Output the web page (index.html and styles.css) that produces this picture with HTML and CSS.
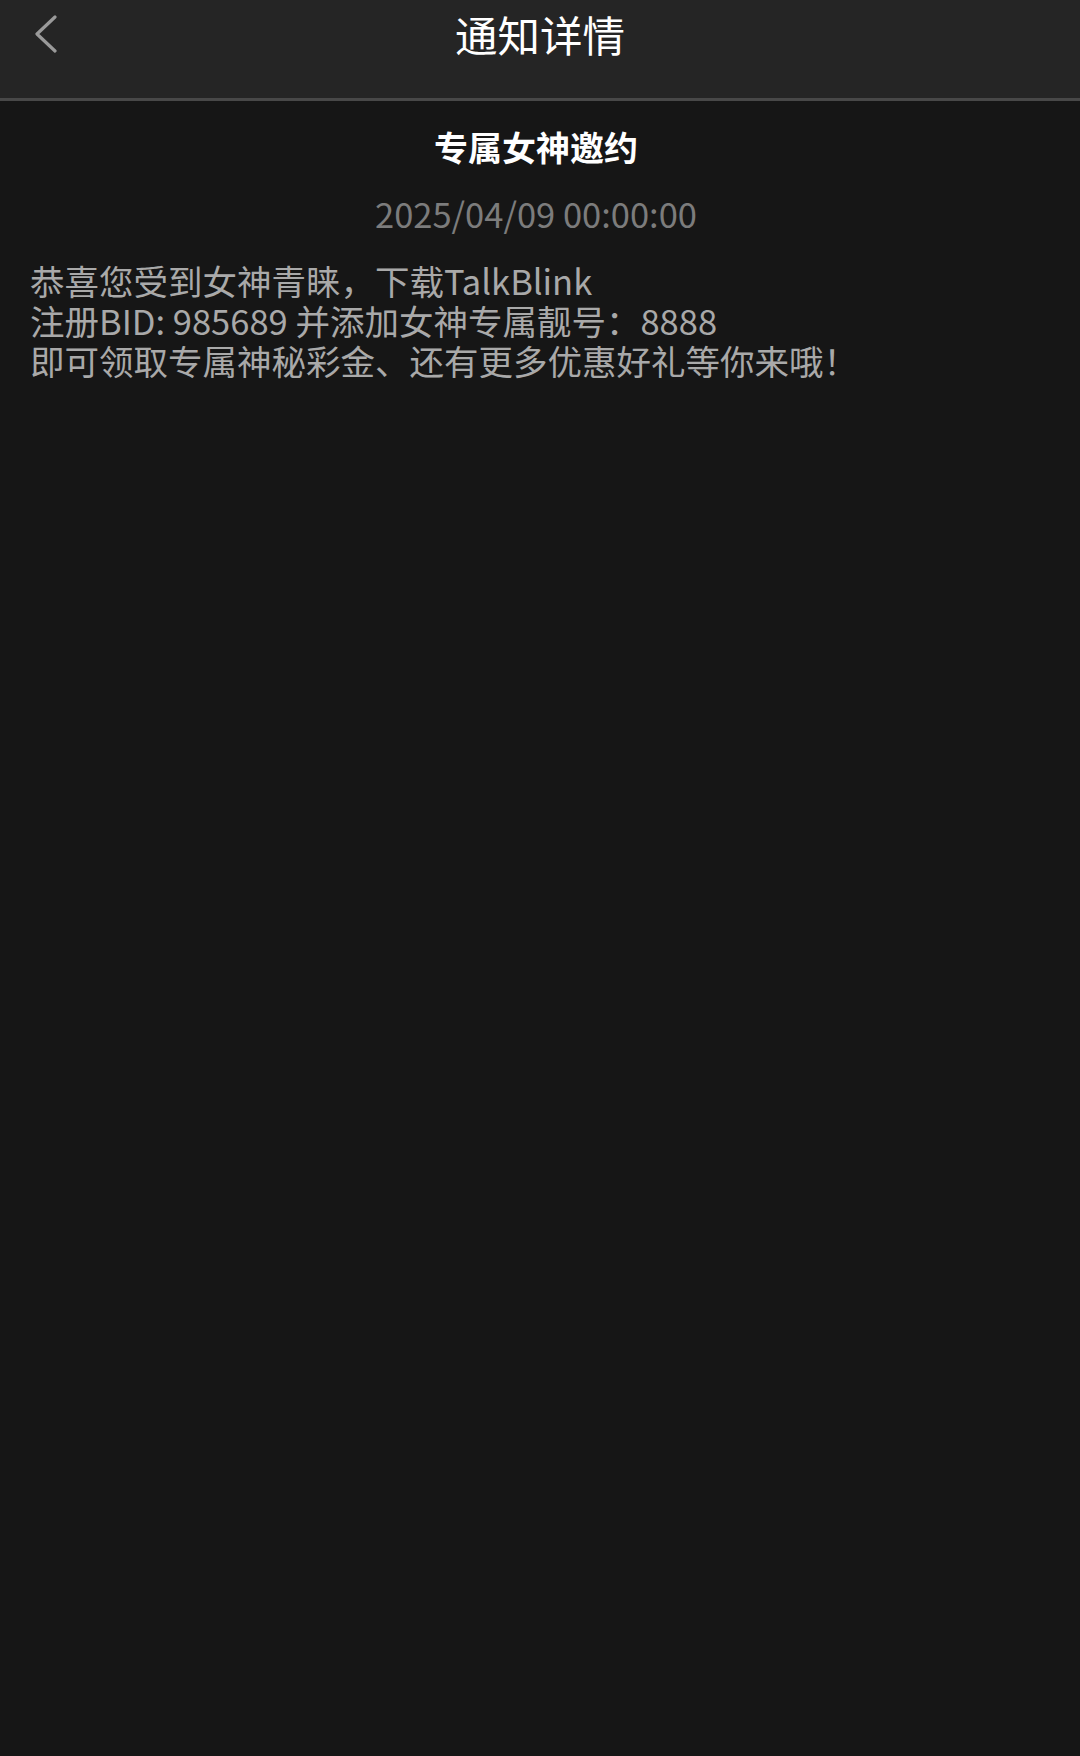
FILE: index.html
```html
<!DOCTYPE html>
<html lang="zh-CN">
<head>
<meta charset="utf-8">
<title>通知详情</title>
<link rel="stylesheet" href="styles.css">
</head>
<body>
<header class="topbar">
  <div class="back">
    <svg class="back-icon" width="24" height="38" viewBox="0 0 24 38" aria-hidden="true">
      <polyline points="21,2 3,19 21,36" fill="none" stroke="#9a9a9a" stroke-width="3.2" stroke-linecap="round" stroke-linejoin="round"/>
    </svg>
  </div>
  <h1 class="page-title">通知详情</h1>
  <div class="spacer"></div>
</header>
<main class="content">
  <h2 class="notice-title">专属女神邀约</h2>
  <div class="notice-time">2025/04/09 00:00:00</div>
  <p class="notice-body">恭喜您受到女神青睐，下载TalkBlink<br>注册BID: 985689 并添加女神专属靓号：8888<br>即可领取专属神秘彩金、还有更多优惠好礼等你来哦！</p>
</main>
</body>
</html>
```
FILE: styles.css
```css
html, body {
  margin: 0;
  padding: 0;
  background: #161616;
  height: 100%;
}
body {
  font-family: "Noto Sans CJK SC", "Noto Sans", sans-serif;
  color: #ffffff;
}
.topbar {
  display: grid;
  grid-template-columns: 1fr auto 1fr;
  align-items: start;
  height: 98px;
  background: #252525;
  border-bottom: 3px solid #484848;
  box-sizing: content-box;
}
.back {
  padding-left: 34px;
  padding-top: 15px;
  display: flex;
}
.page-title {
  margin: 0;
  padding-top: 12px;
  font-size: 42.5px;
  line-height: 44px;
  font-weight: 400;
  color: #ffffff;
}
.content {
  padding: 24px 30px 0;
  display: flex;
  flex-direction: column;
}
.notice-title {
  margin: 0;
  text-align: center;
  font-size: 34px;
  line-height: 44px;
  font-weight: 700;
  color: #ffffff;
  padding-right: 8px;
}
.notice-time {
  margin-top: 22px;
  text-align: center;
  font-size: 34.5px;
  line-height: 44px;
  color: #7c7c7c;
  padding-right: 8px;
}
.notice-body {
  margin: 25px 0 0;
  font-size: 34.5px;
  line-height: 40px;
  color: #a9a9a9;
}
```
